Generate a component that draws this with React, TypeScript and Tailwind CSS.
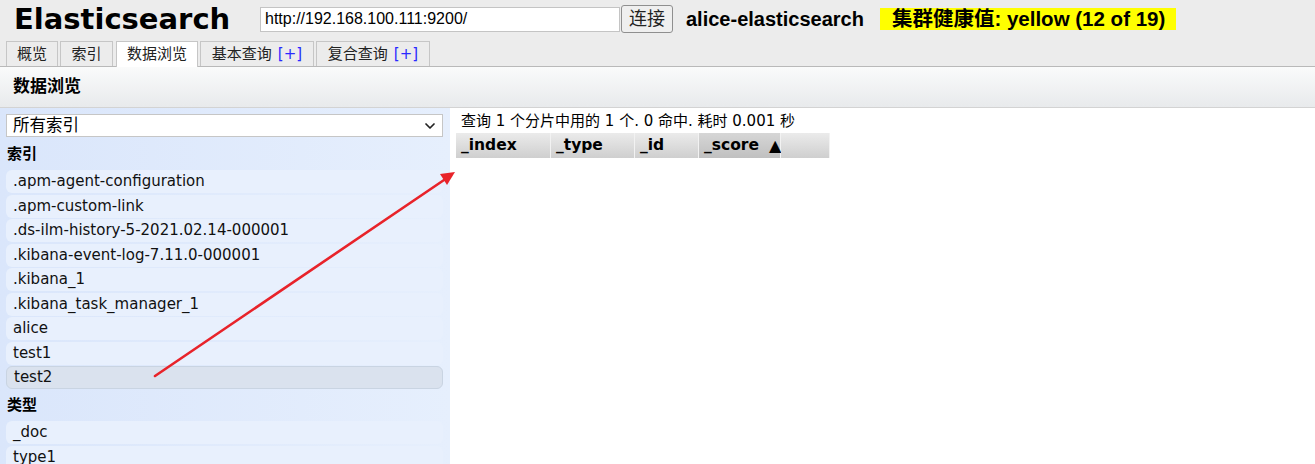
import { ChevronDown } from 'lucide-react'

const cjk = "font-['Liberation_Sans','Noto_Sans_CJK_SC',sans-serif]"
const verdana = "font-['DejaVu_Sans','Noto_Sans_CJK_SC',sans-serif]"

const indices = [
  '.apm-agent-configuration',
  '.apm-custom-link',
  '.ds-ilm-history-5-2021.02.14-000001',
  '.kibana-event-log-7.11.0-000001',
  '.kibana_1',
  '.kibana_task_manager_1',
  'alice',
  'test1',
  'test2',
]

const types = ['_doc', 'type1']

const tabs = [
  { label: '概览', w: 'w-[52px]' },
  { label: '索引', w: 'w-[53px]' },
  { label: '数据浏览', w: 'w-[82px] ml-[1px]', active: true },
  { label: '基本查询', w: 'w-[114px]', plus: true },
  { label: '复合查询', w: 'w-[114px]', plus: true },
]

const columns = [
  { label: '_index', w: 'w-[95px]' },
  { label: '_type', w: 'w-[84px]' },
  { label: '_id', w: 'w-[64px]' },
  { label: '_score', w: 'w-[82px]', sorted: true },
  { label: '', w: 'w-[49px]' },
]

function ListItem({ name, selected }: { name: string; selected?: boolean }) {
  return (
    <div
      className={`h-[23px] flex items-center pl-[7px] rounded-[6px] text-[15px] text-[#111] ${
        selected ? 'bg-[#dae2ee] border border-[#c9d4e2]' : 'bg-[#e8f0fd]'
      }`}
    >
      {name}
    </div>
  )
}

export default function App() {
  return (
    <div className={`relative w-full h-[464px] overflow-hidden bg-[#ececec] ${cjk}`}>
      {/* top bar */}
      <div className="flex items-center h-[41px] pb-[3px]">
        <h1 className={`ml-[14px] w-[246px] text-[29px] font-bold leading-none text-black ${verdana}`}>
          Elasticsearch
        </h1>
        <div className="w-[360px] h-[25px] bg-white border border-[#c4c4c4] flex items-center px-[4px] text-[16px] text-black">
          http://192.168.100.111:9200/
        </div>
        <button className="ml-[1px] w-[52px] h-[28px] bg-[#efefef] border border-[#8f8f8f] rounded-[3px] text-[18px] leading-none text-[#222]">
          连接
        </button>
        <span className="ml-[13px] text-[20px] font-bold text-black">alice-elasticsearch</span>
        <span className="ml-[16px] h-[22px] w-[296px] pl-[12px] bg-[#ffff00] flex items-center text-[20.5px] font-bold text-black">
          集群健康值: yellow (12 of 19)
        </span>
      </div>

      {/* tabs */}
      <div className="flex items-end gap-[2px] pl-[6px] h-[26px] border-b border-[#b9b9b9]">
        {tabs.map(t => (
          <div
            key={t.label}
            className={`${t.w} flex items-center justify-center border border-b-0 border-[#c6c6c6] text-[15px] text-[#222] ${
              t.active ? 'h-[26px] -mb-px bg-white' : 'h-[25px] bg-[#ececec]'
            }`}
          >
            {t.label}
            {t.plus && <span className={`ml-[6px] text-[15px] text-[#2a2aff] ${verdana}`}>[+]</span>}
          </div>
        ))}
      </div>

      {/* section header */}
      <div className="h-[41px] flex items-center pl-[13px] bg-gradient-to-b from-[#fafbfb] to-[#e8eaec] border-b border-[#d3d3d3]">
        <span className="text-[17px] font-bold text-black">数据浏览</span>
      </div>

      <div className="flex h-[356px]">
        {/* sidebar */}
        <div className="w-[450px] bg-gradient-to-r from-[#dae6fb] to-[#e6effd] pl-[6px] pr-[7px] pt-[6px]">
          <div className="h-[23px] bg-white border border-[#c6c6c6] flex items-center justify-between pl-[6px] pr-[4px] text-[16.5px] text-black">
            所有索引
            <ChevronDown size={16} strokeWidth={2.6} className="text-[#222]" />
          </div>
          <div className="h-[33px] pt-[2px] flex items-center pl-px text-[15px] font-bold text-black">索引</div>
          <div className={`flex flex-col gap-[1.5px] ${verdana}`}>
            {indices.map(n => (
              <ListItem key={n} name={n} selected={n === 'test2'} />
            ))}
          </div>
          <div className="h-[32px] flex items-center pl-px text-[15px] font-bold text-black">类型</div>
          <div className={`flex flex-col gap-[1.5px] ${verdana}`}>
            {types.map(n => (
              <ListItem key={n} name={n} />
            ))}
          </div>
        </div>

        {/* results */}
        <div className="flex-1 bg-white pl-[6px] pt-[4px]">
          <div className={`pl-[5px] text-[15px] leading-[18px] text-black whitespace-nowrap ${verdana}`}>
            查询 1 个分片中用的 1 个. 0 命中. 耗时 0.001 秒
          </div>
          <div className={`mt-[3px] flex h-[25px] ${verdana}`}>
            {columns.map((c, i) => (
              <div
                key={i}
                className={`${c.w} flex items-center pl-[5px] text-[15.5px] font-bold text-black border-r border-[#f2f2f2] ${
                  c.sorted
                    ? 'bg-gradient-to-b from-[#d6d6d6] to-[#c0c0c0]'
                    : 'bg-gradient-to-b from-[#ebebeb] to-[#cfcfcf]'
                }`}
              >
                {c.label}
                {c.sorted && <span className="ml-[10px] text-[16px] leading-none">▲</span>}
              </div>
            ))}
          </div>
        </div>
      </div>

      {/* annotation arrow */}
      <svg className="absolute left-0 top-0 pointer-events-none" width="1315" height="464">
        <line x1="155" y1="376" x2="444" y2="180" stroke="#e8232a" strokeWidth="2.6" strokeLinecap="round" />
        <polygon points="455,172 440,174 447,185" fill="#e8232a" />
      </svg>
    </div>
  )
}
